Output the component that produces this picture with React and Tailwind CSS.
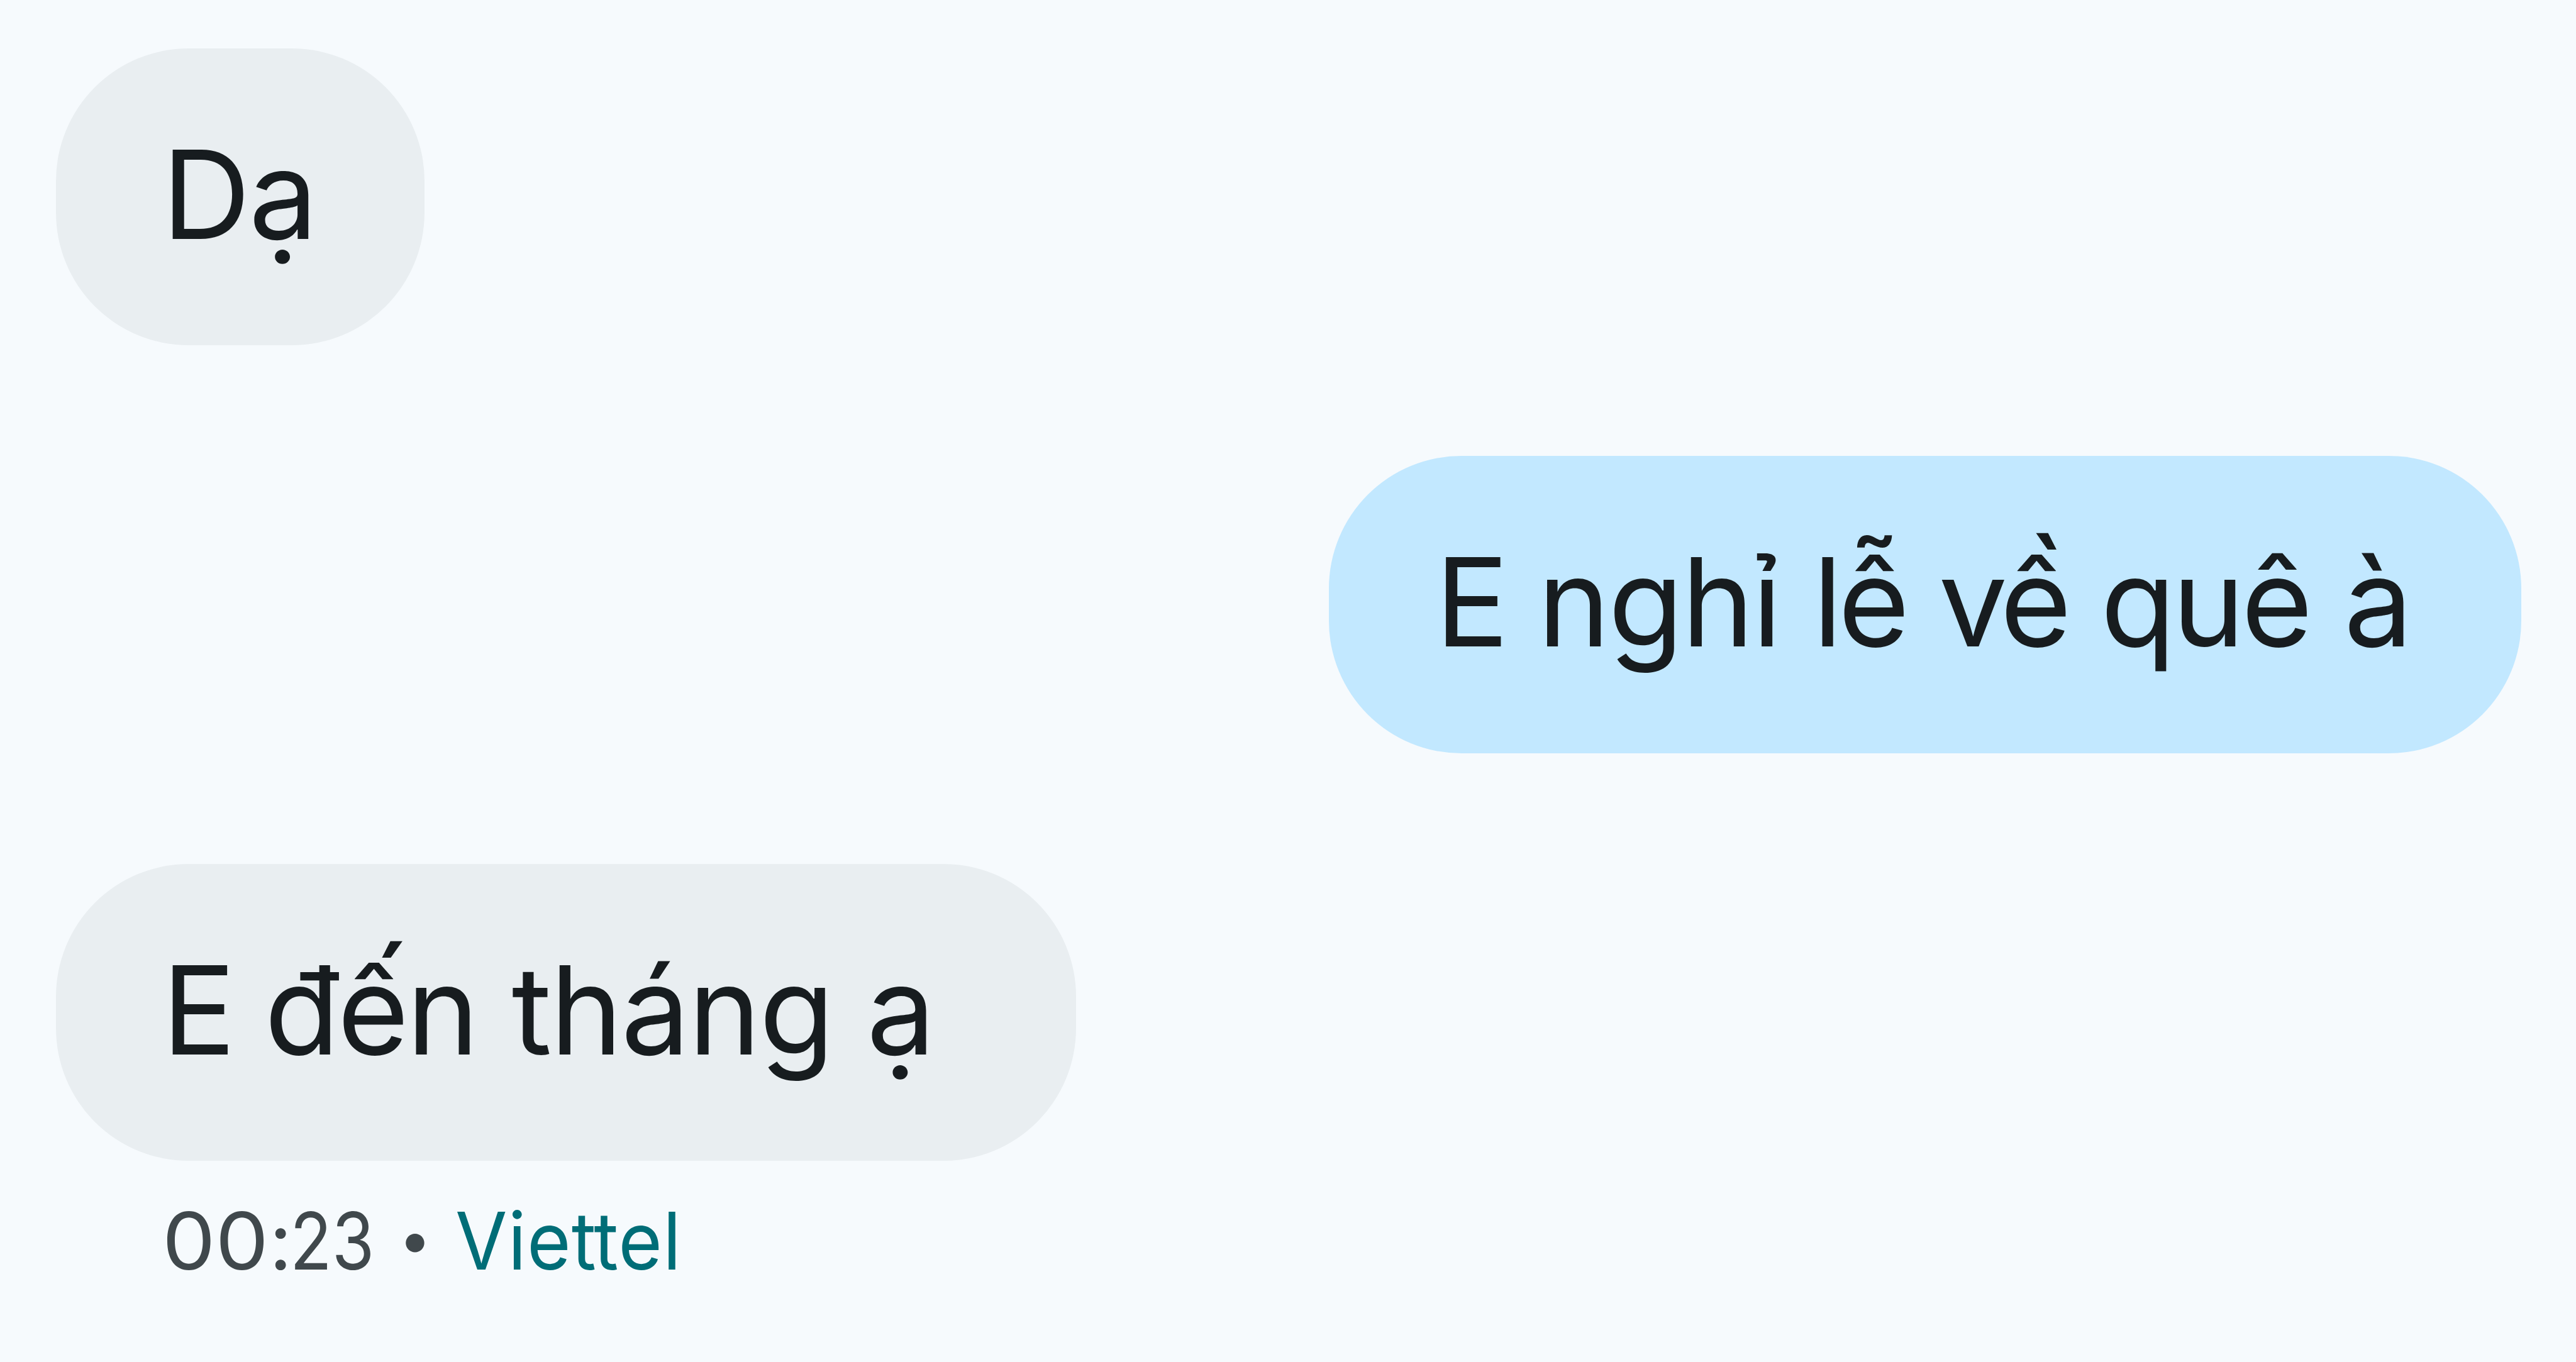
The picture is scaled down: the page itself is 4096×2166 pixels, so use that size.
function Word({ className = "", children }) {
  return <span className={`inline-block ${className}`}>{children}</span>;
}

function Bubble({ className, children }) {
  return (
    <div
      className={`h-[472.5px] shrink-0 rounded-[211px] text-[195px] leading-[465px] whitespace-nowrap text-[#171c1f] ${className}`}
    >
      {children}
    </div>
  );
}

export default function App() {
  return (
    <main className="flex h-[2166px] w-[4096px] flex-col items-start overflow-hidden bg-[#f6fafd] pt-[76.5px] pr-[87.5px] pl-[88.5px] font-['Inter','Roboto',sans-serif]">
      <Bubble className="w-[586px] bg-[#e9eef1] pl-[169px]">
        <Word className="tracking-[-2.5px]">Dạ</Word>
      </Bubble>

      <Bubble className="mt-[176px] w-[1896px] self-end bg-[#c2e8ff] pl-[169.5px]">
        <Word className="w-[163px]">E </Word>
        <Word className="w-[437.5px] tracking-[-3px]">nghỉ </Word>
        <Word className="w-[200px] tracking-[-7px]">lễ </Word>
        <Word className="w-[257.5px] tracking-[-8px]">về </Word>
        <Word className="w-[387px] tracking-[-5.5px]">quê </Word>
        <Word>à</Word>
      </Bubble>

      <Bubble className="mt-[176px] w-[1622px] bg-[#e9eef1] pl-[169px]">
        <Word className="w-[163px]">E </Word>
        <Word className="w-[393px] tracking-[-3.5px]">đến </Word>
        <Word className="w-[564.5px] tracking-[-2.5px]">tháng </Word>
        <Word>ạ</Word>
      </Bubble>

      <div className="mt-[41.5px] flex shrink-0 pl-[169px] text-[126.5px] leading-[170px] whitespace-nowrap text-[#40484c]">
        <div className="flex w-[376px]">
          <span className="w-[170.5px] origin-left scale-x-[1.06]">00</span>
          <span className="w-[33px]">:</span>
          <span className="origin-left scale-x-[0.865]">23</span>
        </div>
        <span className="w-[90px] text-[94px] leading-[165px]">•</span>
        <span className="origin-left scale-x-[0.945] text-[#006d77]">
          <span className="tracking-[1.3px]">Vie</span>
          <span className="tracking-[-4px]">t</span>
          <span className="tracking-[1.2px]">tel</span>
        </span>
      </div>
    </main>
  );
}
